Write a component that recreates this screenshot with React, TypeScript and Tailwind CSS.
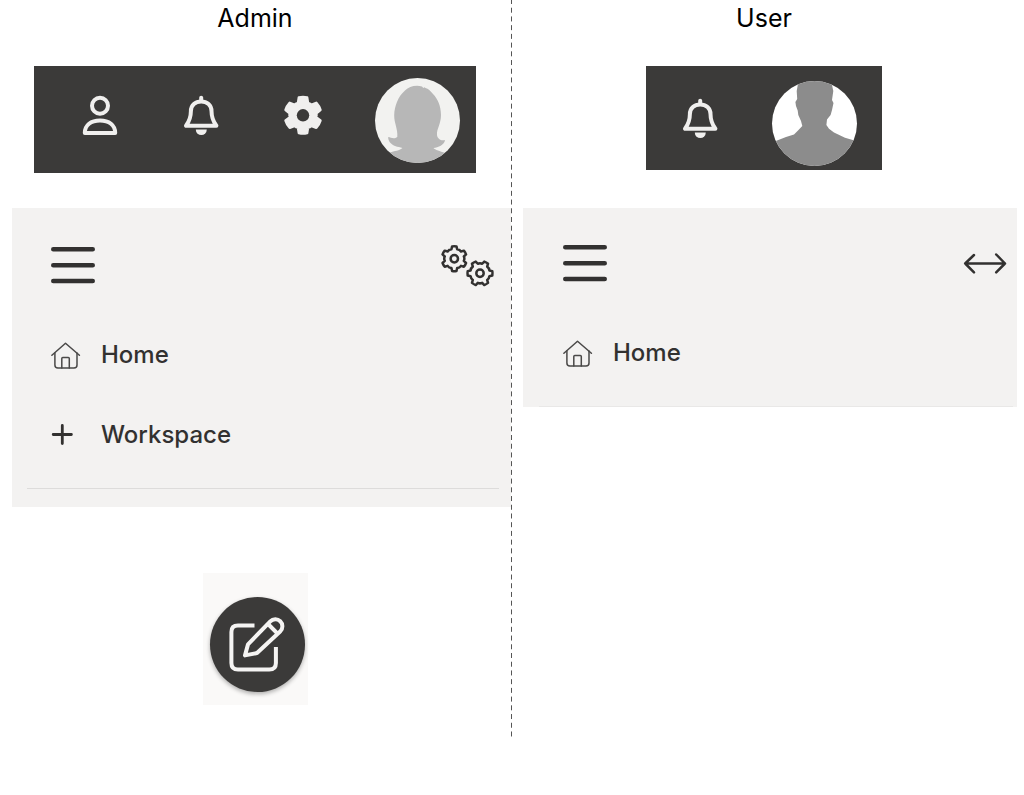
import type { ReactNode } from "react";

function gearPath(cx: number, cy: number, outer: number, root: number, startDeg: number, tip: number, base: number) {
  const at = (r: number, deg: number) => {
    const a = (deg * Math.PI) / 180;
    return `${(cx + r * Math.cos(a)).toFixed(2)} ${(cy + r * Math.sin(a)).toFixed(2)}`;
  };
  const parts: string[] = [];
  for (let i = 0; i < 6; i++) {
    const c = startDeg + i * 60;
    parts.push(`${i === 0 ? "M" : "L"}${at(root, c - base)} L${at(outer, c - tip)} A${outer} ${outer} 0 0 1 ${at(outer, c + tip)} L${at(root, c + base)}`);
    parts.push(`Q${at(root + 0.8, c + 30)} ${at(root, c + 60 - base)}`);
  }
  return parts.join(" ") + "Z";
}

function PersonIcon() {
  return (
    <svg viewBox="0 0 40 40" className="size-10 overflow-visible" fill="none" stroke="#f0efee" strokeWidth="4" strokeLinejoin="round">
      <circle cx="20" cy="10.8" r="8" />
      <path d="M4.8 38C4.8 30 11 25.4 20 25.4S35.2 30 35.2 38Z" />
    </svg>
  );
}

function BellIcon() {
  return (
    <svg viewBox="0 0 40 40" className="size-10 overflow-visible" fill="none" stroke="#f0efee" strokeWidth="4" strokeLinejoin="round" strokeLinecap="round">
      <path d="M5 30.8H35.4C32.2 26.5 30.5 22.5 30.5 16C30.5 10 26 6.4 20.2 6.4S9.9 10 9.9 16C9.9 22.5 8.2 26.5 5 30.8Z" />
      <path d="M20.2 2.8V5" />
      <path d="M14.8 34.6H25.8A5.5 5.5 0 0 1 14.8 34.6Z" fill="#f0efee" stroke="none" />
    </svg>
  );
}

function GearIcon() {
  return (
    <svg viewBox="0 0 40 40" className="size-10 overflow-visible">
      <path d={gearPath(21, 20.3, 18.2, 13.2, -90, 13, 22)} fill="#f0efee" stroke="#f0efee" strokeWidth="2.6" strokeLinejoin="round" />
      <circle cx="21" cy="20.3" r="6.2" fill="#3b3a39" />
    </svg>
  );
}

function GearsIcon() {
  return (
    <svg viewBox="0 0 55 46" className="h-[46px] w-[55px] overflow-visible" fill="none" stroke="#323130" strokeWidth="2.5" strokeLinejoin="round">
      <path d={gearPath(14.3, 16.7, 12.5, 9.8, -90, 10, 17)} />
      <circle cx="14.3" cy="16.7" r="3.7" />
      <path d={gearPath(40, 31.3, 12.5, 9.8, 0, 10, 17)} />
      <circle cx="40" cy="31.3" r="3.7" />
    </svg>
  );
}

function MenuIcon() {
  return (
    <svg viewBox="0 0 44 48" className="h-12 w-11" stroke="#323130" strokeWidth="4.6" strokeLinecap="round">
      <path d="M2.3 8.2H41.7M2.3 24.2H41.7M2.3 40H41.7" />
    </svg>
  );
}

function ResizeIcon() {
  return (
    <svg viewBox="0 0 44 24" className="h-6 w-11" fill="none" stroke="#323130" strokeWidth="2.5" strokeLinecap="round" strokeLinejoin="round">
      <path d="M2.2 12.5H42M11 4L2.2 12.5L11 21.3M33.2 3.5L42 12.5L33.2 21.3" />
    </svg>
  );
}

function HomeIcon() {
  return (
    <svg viewBox="0 0 30 30" className="size-[30px]" fill="none" stroke="#4a4948" strokeWidth="1.5" strokeLinecap="round" strokeLinejoin="round">
      <path d="M0.9 15.3L14.5 3.2L28.4 15.3" />
      <path d="M3.9 13V25Q3.9 28 6.9 28H23Q26 28 26 25V13" />
      <path d="M10.8 28V18.6Q10.8 17.6 11.8 17.6H17.3Q18.3 17.6 18.3 18.6V28" />
    </svg>
  );
}

function PlusIcon() {
  return (
    <svg viewBox="0 0 30 30" className="size-[30px]" stroke="#323130" strokeWidth="2.8" strokeLinecap="round">
      <path d="M2.2 14.5H20.4M11.3 5.4V23.6" />
    </svg>
  );
}

function EditIcon() {
  return (
    <svg viewBox="0 0 95 95" className="size-[95px]" fill="none" stroke="#f5f4f3" strokeWidth="4" strokeLinejoin="round">
      <path d="M44.5 28.6H28Q21.4 28.6 21.4 35V66Q21.4 72.6 28 72.6H59.3Q65.9 72.6 65.9 66V50" />
      <path d="M35 58.4L38 47.4L60.3 24.4A7 7 0 0 1 70.4 34.2L47 56Z" />
      <path d="M58 27L67.6 36.6" />
    </svg>
  );
}

function AdminPortrait() {
  return (
    <svg viewBox="0 0 85 85" className="size-[85px] rounded-full bg-[#f2f2f0]" role="img" aria-label="Admin profile">
      <path
        fill="#b7b7b7"
        d="M47 8.5C40 6.5 34 9 30 12.5C23 18.5 19.5 28 19.2 37C19 45 23 51 22.3 59C19 61.5 16 59.5 13.2 59C13 63 15.5 66 20 68C23 69.3 25 69 27.5 70C25 72.5 19 73 15 74.5V85H70V75C65 73 60 72 58.5 70C63 69.5 69.5 67 70 62C66 63 62.5 61 62 57C61.5 51 66 46 66 37C66 28 62.5 20.5 58 16C55 12.5 53.5 10.5 50.5 10L49.5 9.2L48.3 10Z"
      />
    </svg>
  );
}

function UserPortrait() {
  return (
    <svg viewBox="0 0 85 85" className="size-[85px] rounded-full bg-white" role="img" aria-label="User profile">
      <path
        fill="#8c8c8c"
        d="M26 0L25.6 5L24.7 10L25.2 18L23.4 21L24 25L25.7 29.5L26.3 34L29 40L30.3 45L26 49.5L22 53.5L14 56L0 61.5V85H85V60.2L73 56.7L62 51.5L57 47.8L54.4 44L55 38.5L58.6 34L60 29L61.5 22L60 19L61.3 10L60 4L58.5 0Z"
      />
    </svg>
  );
}

function IconButton({ label, children }: { label: string; children: ReactNode }) {
  return (
    <button type="button" aria-label={label} className="block cursor-pointer">
      {children}
    </button>
  );
}

function NavItem({ icon, children }: { icon: ReactNode; children: ReactNode }) {
  return (
    <li>
      <a href="#" className="flex h-8 items-center gap-5 text-2xl font-medium text-[#323130]">
        {icon}
        {children}
      </a>
    </li>
  );
}

export default function App() {
  return (
    <main className="grid min-h-screen grid-cols-[1fr_1px_1fr] items-start bg-white pr-px font-['Inter','Liberation_Sans',sans-serif]">
      <section className="flex flex-col pb-[34px] pl-3">
        <h2 className="pr-[13px] text-center text-[25px] leading-9 text-black">Admin</h2>
        <div className="mt-[30px] min-h-[142px] pr-[13px]">
          <div className="mx-auto flex w-fit items-start bg-[#3b3a39] pt-3 pr-4 pb-[10px] pl-[46px]">
            <div className="mt-[17px] mr-[53px] flex gap-[61px]">
              <IconButton label="Account"><PersonIcon /></IconButton>
              <IconButton label="Notifications"><BellIcon /></IconButton>
              <IconButton label="Settings"><GearIcon /></IconButton>
            </div>
            <AdminPortrait />
          </div>
        </div>
        <nav aria-label="Admin menu" className="bg-[#f3f2f1] pt-[33px] pb-[18px]">
          <div className="flex h-12 items-center justify-between pr-4 pl-[39px]">
            <IconButton label="Menu"><MenuIcon /></IconButton>
            <IconButton label="Configure"><GearsIcon /></IconButton>
          </div>
          <ul className="mt-[50px] flex flex-col gap-12 pl-[39px]">
            <NavItem icon={<HomeIcon />}>Home</NavItem>
            <NavItem icon={<PlusIcon />}>Workspace</NavItem>
          </ul>
          <hr className="mt-[37px] mr-3 ml-[15px] border-[#dddcdb]" />
        </nav>
        <div className="mt-[66px] pr-[13px]">
          <div className="mx-auto w-fit bg-[#faf9f8] pt-6 pr-[3px] pb-[13px] pl-[7px]">
            <button type="button" aria-label="Edit" className="block cursor-pointer rounded-full bg-[#3b3a39] shadow-[0_2px_4px_rgba(0,0,0,0.3)]">
              <EditIcon />
            </button>
          </div>
        </div>
      </section>

      <svg className="h-full max-h-[739px] w-px" aria-hidden="true">
        <line x1="0.5" y1="0" x2="0.5" y2="100%" stroke="#555555" strokeWidth="1" strokeDasharray="5 3.72" strokeDashoffset="1" />
      </svg>

      <section className="flex flex-col pr-[6px] pl-[11px]">
        <h2 className="pr-3 text-center text-[25px] leading-9 text-black">User</h2>
        <div className="mt-[30px] min-h-[142px] pr-3">
          <div className="mx-auto flex w-fit items-start bg-[#3b3a39] pt-[15px] pr-[25px] pb-1 pl-[34px]">
            <div className="mt-[17px] mr-[52px]">
              <IconButton label="Notifications"><BellIcon /></IconButton>
            </div>
            <UserPortrait />
          </div>
        </div>
        <nav aria-label="User menu" className="bg-[#f3f2f1] pt-[31px]">
          <div className="flex h-12 items-center justify-between pr-[10px] pl-10">
            <IconButton label="Menu"><MenuIcon /></IconButton>
            <IconButton label="Resize"><ResizeIcon /></IconButton>
          </div>
          <ul className="mt-[50px] pl-10">
            <NavItem icon={<HomeIcon />}>Home</NavItem>
          </ul>
          <hr className="mt-[37px] mr-1 ml-4 border-[#e9e8e7]" />
        </nav>
      </section>
    </main>
  );
}
